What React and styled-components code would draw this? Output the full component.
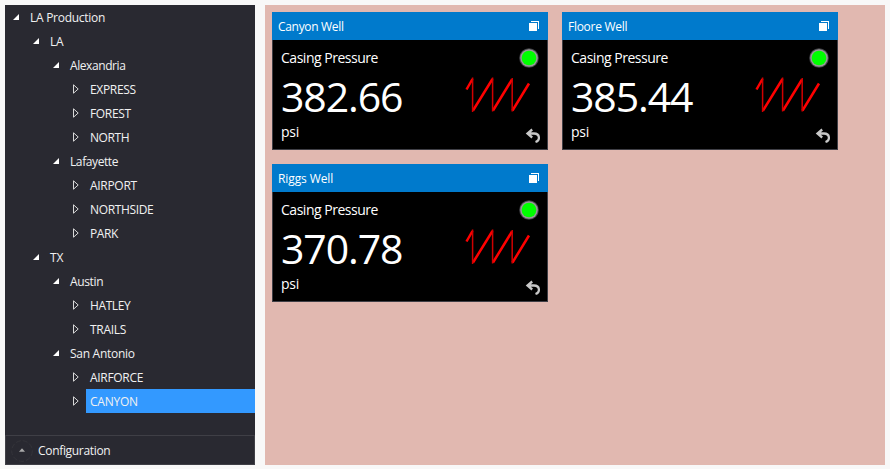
import React from "react";
import styled, { createGlobalStyle } from "styled-components";

const GlobalStyle = createGlobalStyle`
  * { box-sizing: border-box; }
  body {
    margin: 0;
    background: #f8f8f8;
    font-family: "Open Sans", "Noto Sans", sans-serif;
    font-size: 12px;
    overflow: hidden;
  }
`;

const Page = styled.div`
  display: flex;
  gap: 10px;
  width: 890px;
  height: 469px;
  padding: 5px 5px 4px;
`;

const Sidebar = styled.aside`
  display: flex;
  flex-direction: column;
  width: 250px;
  background: #292931;
  color: #f1f1f1;
`;

const Tree = styled.ul`
  flex: 1;
  margin: 0;
  padding: 0;
  list-style: none;
`;

const TreeRow = styled.li`
  display: flex;
  height: 24px;
  padding-left: ${(p) => p.$depth * 20 + 5}px;
`;

const Toggle = styled.svg`
  flex: none;
  width: 16px;
  height: 24px;
`;

const TreeLabel = styled.span`
  flex: 1;
  padding-left: 4px;
  line-height: 25px;
  white-space: nowrap;
  letter-spacing: ${(p) => p.$spacing}px;
  background: ${(p) => (p.$selected ? "#3399ff" : "transparent")};
`;

const ConfigBar = styled.div`
  display: flex;
  align-items: center;
  gap: 5px;
  height: 30px;
  padding: 1px 0 0 5px;
  border: 1px solid #3f3f46;
  letter-spacing: -0.32px;
`;

const ConfigIcon = styled.svg`
  width: 22px;
  height: 22px;
`;

const Canvas = styled.main`
  display: grid;
  grid-template-columns: 276px 276px;
  grid-auto-rows: 138px;
  gap: 14px;
  width: 620px;
  padding: 7px;
  background: #e1b8b0;
`;

const Card = styled.section`
  display: flex;
  flex-direction: column;
  background: #000;
  color: #fff;
`;

const CardHeader = styled.header`
  display: flex;
  align-items: center;
  justify-content: space-between;
  height: 28px;
  padding: 1px 8px 0 6px;
  background: #007acc;
  letter-spacing: ${(p) => p.$spacing}px;
`;

const WindowIcon = styled.svg`
  width: 12px;
  height: 12px;
  margin-bottom: 1px;
`;

const CardBody = styled.div`
  display: flex;
  justify-content: space-between;
  flex: 1;
  border: 1px solid #3f3f46;
  border-top: 0;
  padding: 8px 6px 4px 8px;
`;

const Reading = styled.div`
  display: flex;
  flex-direction: column;
`;

const Metric = styled.div`
  height: 20px;
  font-size: 14px;
  line-height: 20px;
  letter-spacing: -0.48px;
`;

const Value = styled.div`
  height: 54px;
  font-size: 41px;
  line-height: 56px;
  letter-spacing: -1.1px;
`;

const Unit = styled.div`
  height: 20px;
  font-size: 14px;
  line-height: 20px;
  letter-spacing: -0.2px;
`;

const Indicators = styled.div`
  display: flex;
  flex-direction: column;
  align-items: flex-end;
`;

const Lamp = styled.svg`
  width: 20px;
  height: 20px;
  margin-right: 2px;
`;

const Trend = styled.svg`
  width: 66px;
  height: 38px;
  margin: 8px 10px 0 0;
`;

const UndoIcon = styled.svg`
  width: 16px;
  height: 16px;
  margin-top: 14px;
`;

const nodes = [
  { label: "LA Production", depth: 0, open: true, spacing: -0.27 },
  { label: "LA", depth: 1, open: true },
  { label: "Alexandria", depth: 2, open: true, spacing: -0.42 },
  { label: "EXPRESS", depth: 3, spacing: -0.32 },
  { label: "FOREST", depth: 3, spacing: -0.35 },
  { label: "NORTH", depth: 3, spacing: -0.42 },
  { label: "Lafayette", depth: 2, open: true, spacing: -0.4 },
  { label: "AIRPORT", depth: 3, spacing: -0.3 },
  { label: "NORTHSIDE", depth: 3, spacing: -0.36 },
  { label: "PARK", depth: 3, spacing: -0.4 },
  { label: "TX", depth: 1, open: true },
  { label: "Austin", depth: 2, open: true, spacing: -0.35 },
  { label: "HATLEY", depth: 3, spacing: -0.4 },
  { label: "TRAILS", depth: 3, spacing: -0.3 },
  { label: "San Antonio", depth: 2, open: true, spacing: -0.28 },
  { label: "AIRFORCE", depth: 3, spacing: -0.3 },
  { label: "CANYON", depth: 3, selected: true, spacing: -0.25 },
];

const wells = [
  { name: "Canyon Well", value: "382.66", spacing: -0.32 },
  { name: "Floore Well", value: "385.44", spacing: -0.28 },
  { name: "Riggs Well", value: "370.78", spacing: -0.1 },
];

function TreeNode({ label, depth, open, selected, spacing = -0.2 }) {
  return (
    <TreeRow $depth={depth}>
      <Toggle viewBox="0 0 16 24">
        {open ? (
          <path d="M9 9V15H3Z" fill="#fff" />
        ) : (
          <path d="M3.5 7.8V16.2L8.2 12Z" fill="none" stroke="#d8d8d8" />
        )}
      </Toggle>
      <TreeLabel $selected={selected} $spacing={spacing}>{label}</TreeLabel>
    </TreeRow>
  );
}

function WellCard({ name, value, spacing }) {
  return (
    <Card>
      <CardHeader $spacing={spacing}>
        {name}
        <WindowIcon viewBox="0 0 12 12" shapeRendering="crispEdges">
          <path d="M1 3h8v8H1zM3 1h8v8h-1V2H3z" fill="#fff" />
        </WindowIcon>
      </CardHeader>
      <CardBody>
        <Reading>
          <Metric>Casing Pressure</Metric>
          <Value>{value}</Value>
          <Unit>psi</Unit>
        </Reading>
        <Indicators>
          <Lamp viewBox="0 0 20 20">
            <circle cx="10" cy="10" r="9.8" fill="#45454a" />
            <circle cx="10" cy="10" r="8.8" fill="#999" />
            <circle cx="10" cy="10" r="7.3" fill="#00ff00" />
          </Lamp>
          <Trend viewBox="0 0 66 38">
            <path
              d="M1.5 13.5L7.5 3M8 34.5L27.5 3M28 34.5L47 3.5M47.5 34.5L64 7.5"
              fill="none"
              stroke="#f00"
              strokeWidth="2.5"
            />
            <path
              d="M7.6 1.5V36M27.6 1.5V35.5M47.2 2V35.5"
              fill="none"
              stroke="#d00000"
              strokeWidth="1.5"
            />
          </Trend>
          <UndoIcon viewBox="0 0 16 16">
            <path
              d="M7.2 1.5L2.5 5.5L7.2 9.5M3 5.5H9C15 5.5 15.5 12.3 10.5 14"
              fill="none"
              stroke="#c8c8c8"
              strokeWidth="2.3"
            />
          </UndoIcon>
        </Indicators>
      </CardBody>
    </Card>
  );
}

export default function App() {
  return (
    <>
      <GlobalStyle />
      <Page>
        <Sidebar>
          <Tree>
            {nodes.map((node) => (
              <TreeNode key={node.label} {...node} />
            ))}
          </Tree>
          <ConfigBar>
            <ConfigIcon viewBox="0 0 22 22">
              <circle cx="11" cy="11" r="10.3" fill="none" stroke="#34343a" strokeDasharray="5 2" />
              <path d="M8 11.7L11 8.3L14 11.7Z" fill="#aaa" />
            </ConfigIcon>
            Configuration
          </ConfigBar>
        </Sidebar>
        <Canvas>
          {wells.map((well) => (
            <WellCard key={well.name} {...well} />
          ))}
        </Canvas>
      </Page>
    </>
  );
}
